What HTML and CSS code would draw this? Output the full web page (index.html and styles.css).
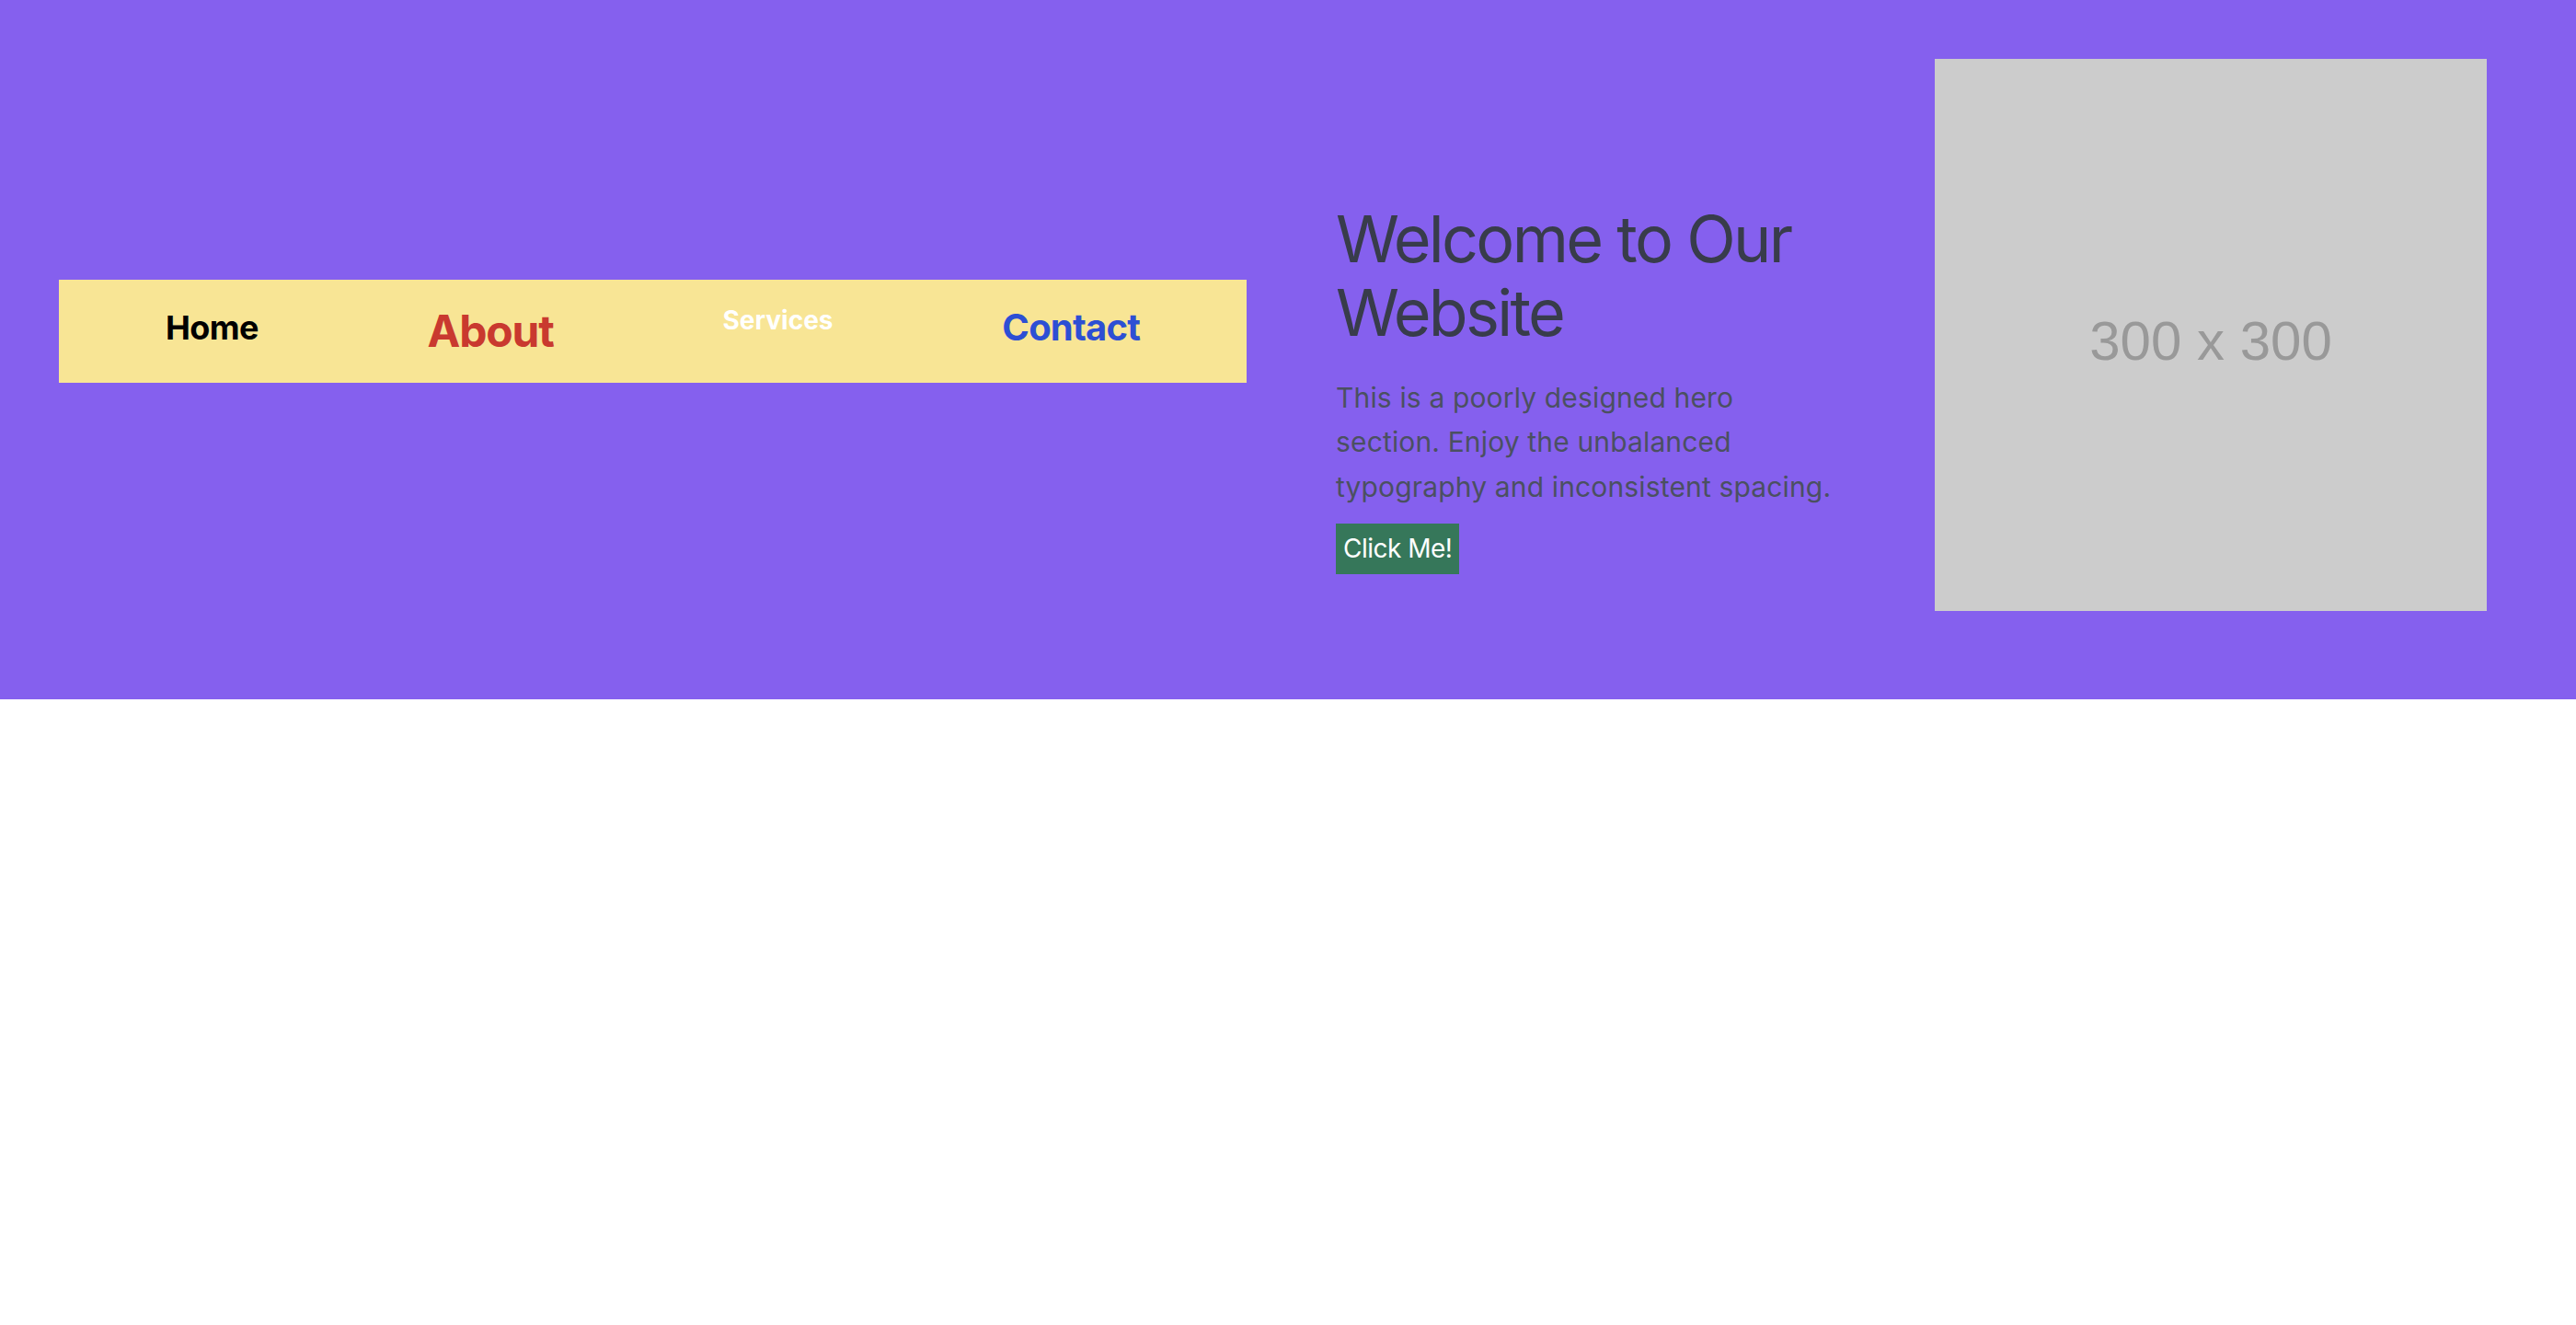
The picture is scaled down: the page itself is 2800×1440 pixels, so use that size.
FILE: index.html
```html
<!DOCTYPE html>
<html lang="en">
<head>
<meta charset="utf-8">
<title>Hero</title>
<link rel="stylesheet" href="styles.css">
</head>
<body>
<section class="hero">
  <nav class="nav">
    <a class="nav-link nav-home" href="#">Home</a>
    <a class="nav-link nav-about" href="#">About</a>
    <a class="nav-link nav-services" href="#">Services</a>
    <a class="nav-link nav-contact" href="#">Contact</a>
  </nav>
  <div class="intro">
    <h1 class="title">Welcome to Our Website</h1>
    <p class="lead">This is a poorly designed hero section. Enjoy the unbalanced typography and inconsistent spacing.</p>
    <button class="cta" type="button">Click Me!</button>
  </div>
  <div class="placeholder"><span class="placeholder-text">300 x 300</span></div>
</section>
</body>
</html>
```

FILE: styles.css
```css
* { box-sizing: border-box; }
html, body { margin: 0; padding: 0; background: #ffffff; }
body { font-family: Inter, "Noto Sans", sans-serif; }

.hero {
  background: #8560ee;
  height: 760px;
  padding: 64px 97px 96px 64px;
  display: flex;
  align-items: center;
}

.nav {
  width: 1291px;
  height: 112px;
  flex: none;
  background: #f8e595;
  padding: 24px;
  display: flex;
  justify-content: space-around;
  align-items: flex-start;
  margin-bottom: 8px;
}
.nav-link { text-decoration: none; font-weight: 700; display: block; }
.nav-home { color: #000000; font-size: 36px; line-height: 56px; letter-spacing: -0.6px; }
.nav-about { color: #c9392f; font-size: 48px; line-height: 64px; letter-spacing: -1.2px; }
.nav-services { color: #ffffff; font-size: 28px; line-height: 40px; }
.nav-contact { color: #2d4fd4; font-size: 40px; line-height: 56px; letter-spacing: -0.8px; }

.intro {
  width: 554px;
  flex: none;
  margin-left: 97px;
  padding-top: 116px;
}
.title {
  margin: 0;
  font-size: 70px;
  line-height: 80px;
  font-weight: 400;
  letter-spacing: -2.7px;
  color: #383c4b;
}
.lead {
  margin: 28px 0 0;
  max-width: 547px;
  font-size: 30px;
  line-height: 48.5px;
  letter-spacing: 0.15px;
  color: #4b5061;
}
.cta {
  margin-top: 16px;
  display: block;
  border: 0;
  background: #36775a;
  color: #ffffff;
  font-family: Inter, "Noto Sans", sans-serif;
  font-size: 28px;
  line-height: 39px;
  letter-spacing: -0.5px;
  padding: 8px 8px;
  cursor: pointer;
}

.placeholder {
  width: 600px;
  height: 600px;
  flex: none;
  margin-left: 97px;
  background: #cccccc;
  display: flex;
  align-items: center;
  justify-content: center;
}
.placeholder-text {
  font-family: "Liberation Sans", Arial, sans-serif;
  font-size: 60px;
  color: #999999;
  padding-top: 12px;
}
```
